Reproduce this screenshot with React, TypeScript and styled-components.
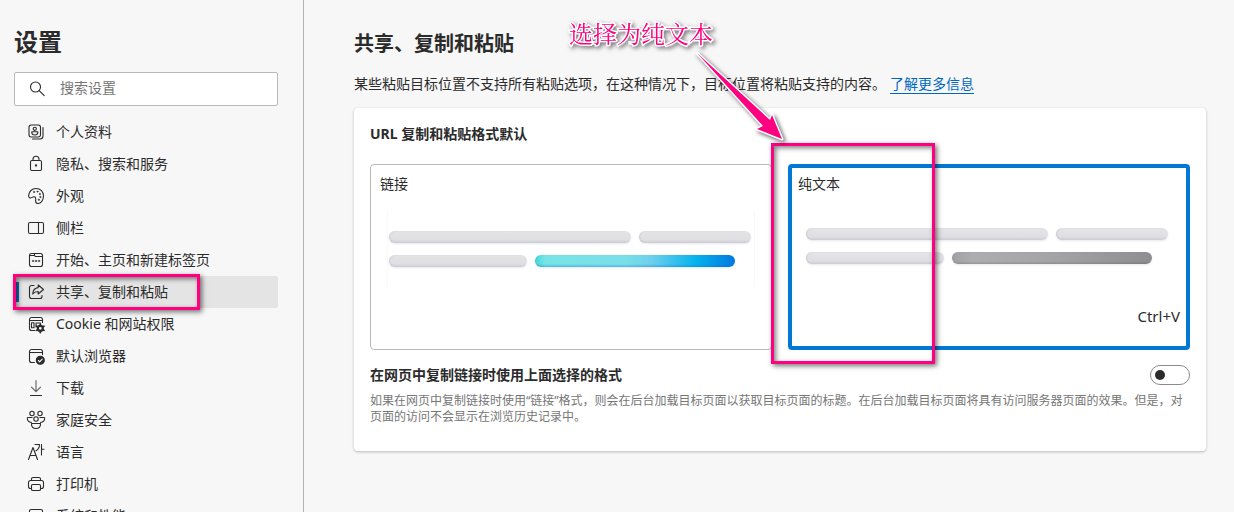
import React from 'react';
import styled, { createGlobalStyle } from 'styled-components';

const ink = '#2b2b2b';
const pink = '#ff0080';
const blue = '#0078d4';

const GlobalStyle = createGlobalStyle`
  * { box-sizing: border-box; }
  body {
    margin: 0;
    background: #f7f7f7;
    color: ${ink};
    font-family: "Noto Sans", "Noto Sans CJK SC", sans-serif;
    font-size: 14px;
    line-height: 20px;
  }
  h1, h2, h3, p, ul { margin: 0; padding: 0; }
`;

const Page = styled.div`
  display: flex;
  height: 100vh;
  overflow: hidden;
`;

const Sidebar = styled.aside`
  flex: 0 0 304px;
  padding: 28px 25px 0 14px;
  border-right: 1px solid #b4b4b4;
`;

const SidebarTitle = styled.h1`
  font-size: 24px;
  line-height: 28px;
  font-weight: 700;
`;

const SearchBox = styled.label`
  display: flex;
  align-items: center;
  gap: 13px;
  height: 34px;
  margin: 16px 0 10px;
  padding: 0 12px;
  background: #fff;
  border: 1px solid #b9b9b9;
  border-radius: 2px;
`;

const SearchInput = styled.input`
  flex: 1;
  min-width: 0;
  padding: 0 0 2px;
  border: 0;
  outline: 0;
  background: none;
  font: inherit;
  color: ${ink};
  &::placeholder { color: #757575; opacity: 1; }
`;

const NavList = styled.ul`
  list-style: none;
`;

const NavItem = styled.li`
  position: relative;
`;

const NavLink = styled.a<{ $active?: boolean }>`
  display: flex;
  align-items: center;
  gap: 10px;
  height: 32px;
  padding-left: 12px;
  border-radius: 2px;
  color: ${ink};
  text-decoration: none;
  white-space: nowrap;
  background: ${p => (p.$active ? '#e4e4e4' : 'transparent')};
`;

const ActiveMark = styled.span`
  position: absolute;
  left: 2px;
  top: 6px;
  width: 3px;
  height: 20px;
  background: #1068b4;
`;

const Icon = styled.svg`
  flex: none;
  width: 20px;
  height: 20px;
  fill: none;
  stroke: ${ink};
  stroke-width: 1.1;
  stroke-linecap: round;
  stroke-linejoin: round;
`;

const Highlight = styled.span`
  position: absolute;
  z-index: 2;
  border: 3px solid ${pink};
  box-shadow: 2px 2px 5px rgba(0, 0, 0, 0.55), inset 2px 2px 5px rgba(0, 0, 0, 0.5);
  pointer-events: none;
`;

const NavHighlight = styled(Highlight)`
  left: -1px;
  top: -2px;
  width: 187px;
  height: 36px;
`;

const OptionHighlight = styled(Highlight)`
  left: -17px;
  top: -21px;
  width: 164px;
  height: 221px;
`;

const Main = styled.main`
  position: relative;
  flex: 1;
  min-width: 0;
  padding: 30px 28px 0 50px;
`;

const Heading = styled.h2`
  font-size: 20px;
  line-height: 28px;
  font-weight: 700;
`;

const Intro = styled.p`
  margin: 16px 0 14px;
`;

const MoreLink = styled.a`
  margin-left: 4px;
  color: #0067c0;
  text-decoration: none;
  border-bottom: 1px solid #0067c0;
`;

const Card = styled.section`
  padding: 16px 16px 26px;
  background: #fff;
  border-radius: 4px;
  box-shadow: 0 1px 3px rgba(0, 0, 0, 0.25);
`;

const CardTitle = styled.h3`
  font-size: 14px;
  line-height: 20px;
  font-weight: 700;
`;

const Options = styled.div`
  display: grid;
  grid-template-columns: 1fr 1fr;
  gap: 16px;
  margin: 20px 0 15px;
`;

const OptionSlot = styled.div`
  position: relative;
`;

const Option = styled.label<{ $selected?: boolean }>`
  display: flex;
  flex-direction: column;
  height: 186px;
  padding: ${p => (p.$selected ? '6px' : '9px')};
  border: ${p => (p.$selected ? `4px solid ${blue}` : '1px solid #b9b9b9')};
  border-radius: 4px;
`;

const HiddenRadio = styled.input`
  position: absolute;
  opacity: 0;
  margin: 0;
`;

const Preview = styled.div<{ $framed?: boolean }>`
  display: flex;
  flex-direction: column;
  justify-content: center;
  gap: 12px;
  height: 76px;
  margin: ${p => (p.$framed ? '17px 7px 0' : '14px 7px 0')};
  padding-left: 1px;
  border: solid #f9f9f9;
  border-width: ${p => (p.$framed ? '0 1px' : '0')};
`;

const BarRow = styled.div`
  display: flex;
  gap: 8px;
`;

const tones = {
  plain: 'linear-gradient(#e3e3e6, #e0dfe3 70%, #cfced4)',
  link: 'linear-gradient(transparent 75%, rgba(0, 110, 220, 0.35)), linear-gradient(90deg, #3fd8d8, #78e4e6 5%, #7adfe8 45%, #6fd0ec 58%, #06b4ec 80%, #0078e0)',
  text: 'linear-gradient(transparent 75%, rgba(0, 0, 0, 0.12)), linear-gradient(90deg, #a0a0a2, #adadaf 10%, #a4a4a6 50%, #8e8e90)',
};

const Bar = styled.span<{ $width: number; $tone?: keyof typeof tones }>`
  width: ${p => p.$width}px;
  height: 12px;
  border-radius: 6px;
  background: ${p => tones[p.$tone ?? 'plain']};
  box-shadow: inset 1px 0 1px rgba(90, 90, 110, 0.15), 0 1px 2px rgba(120, 120, 180, 0.18);
`;

const Shortcut = styled.span`
  margin: auto 0 14px;
  font-size: 15px;
  text-align: right;
`;

const ToggleRow = styled.div`
  display: flex;
  align-items: center;
  justify-content: space-between;
`;

const ToggleLabel = styled.label`
  font-weight: 700;
`;

const Toggle = styled.input`
  appearance: none;
  position: relative;
  width: 40px;
  height: 20px;
  margin: 0;
  border: 1px solid #8a8a8a;
  border-radius: 10px;
  background: #fff;
  &::before {
    content: '';
    position: absolute;
    left: 4px;
    top: 4px;
    width: 10px;
    height: 10px;
    border-radius: 50%;
    background: ${ink};
  }
  &:checked::before { left: 24px; }
`;

const Hint = styled.p`
  margin-top: 8px;
  color: #767676;
  font-size: 12px;
  line-height: 16px;
`;

const NoteText = styled.span`
  position: absolute;
  left: 265px;
  top: 17px;
  z-index: 3;
  color: ${pink};
  font-family: "Noto Serif CJK SC", "Noto Sans CJK SC", serif;
  font-size: 24px;
  font-weight: 400;
  line-height: 32px;
  white-space: nowrap;
  -webkit-text-stroke: 3px #fff;
  paint-order: stroke fill;
  filter: drop-shadow(2px 2px 2px rgba(0, 0, 0, 0.5));
`;

const NoteArrow = styled.svg`
  position: absolute;
  left: 386px;
  top: 46px;
  z-index: 3;
  width: 104px;
  height: 104px;
  filter: drop-shadow(2px 2px 2px rgba(0, 0, 0, 0.6));
  pointer-events: none;
`;

const icons = {
  profile: (
    <>
      <rect x="3" y="3" width="11.5" height="12" rx="2.2" />
      <path d="M17 5.5v8.5a3 3 0 0 1-3 3H6.5" />
      <circle cx="8.8" cy="6.8" r="1.6" />
      <path d="M5.8 9.8h6v.8c0 1.6-1.4 2.4-3 2.4s-3-.8-3-2.4z" />
    </>
  ),
  lock: (
    <>
      <rect x="4.5" y="6.5" width="11" height="10" rx="1.5" />
      <path d="M7 6.5V5.2a3 3 0 0 1 6 0v1.3" />
      <circle cx="10" cy="11.5" r=".6" fill={ink} />
    </>
  ),
  palette: (
    <>
      <path d="M2.6 9.6C2.8 5.4 6 2.5 10 2.5c4.6 0 7.5 3.4 7.5 7.6 0 4.1-2.7 7.4-5.4 7.4-1.8 0-2.5-1.3-2.5-2.8 0-1.1.3-1.9-.1-2.9-.4-1-1.5-1.3-2.5-.9-1.2.5-2 1.3-3.1 1-.9-.2-1.3-1.2-1.3-2.3z" />
      <g fill={ink} strokeWidth=".4">
        <circle cx="8" cy="6" r=".7" />
        <circle cx="11.5" cy="5.6" r=".7" />
        <circle cx="13.8" cy="8" r=".7" />
        <circle cx="14.3" cy="11" r=".7" />
        <circle cx="12.8" cy="13.8" r=".7" />
      </g>
    </>
  ),
  panel: (
    <>
      <rect x="2.5" y="4.5" width="15" height="11" rx="1.5" />
      <path d="M12.5 4.500v11" />
    </>
  ),
  start: (
    <>
      <rect x="3.5" y="3.5" width="13" height="13" rx="2" />
      <path d="M3.5 5.5h5M8.500 3.500v1.800a1.200 1.200 0 0 0 1.200 1.200h6.800" />
      <g fill={ink} strokeWidth=".4">
        <circle cx="7" cy="11" r=".8" />
        <circle cx="10" cy="11" r=".8" />
        <circle cx="13" cy="11" r=".8" />
      </g>
    </>
  ),
  share: (
    <>
      <path d="M8 3.500H5.500a2 2 0 0 0-2 2v9a2 2 0 0 0 2 2H14a2 2 0 0 0 2-2v-1" />
      <path d="M12.200 3 17.500 7.500l-5.300 4.500V9.500c-2.400 0-4.200.8-5.500 2.500.2-3.600 2-6 5.500-6.400z" />
    </>
  ),
  cookie: (
    <>
      <path d="M16.500 8.500v-3a2 2 0 0 0-2-2h-9a2 2 0 0 0-2 2v9a2 2 0 0 0 2 2H9M3.500 6.500h13M5.500 8.800h2.500v5H5.500zM10 13V9h4.500" />
      <circle cx="14.300" cy="14.300" r="2.500" strokeWidth="2.200" />
      <path d="M14.300 10v1.200M14.300 17.400v1.200M10.600 12.200l1 .6M17 15.800l1 .6M10.600 16.400l1-.6M17 12.800l1-.6" strokeWidth="1.800" />
    </>
  ),
  browser: (
    <>
      <path d="M16.500 8.500v-3a2 2 0 0 0-2-2h-9a2 2 0 0 0-2 2v9a2 2 0 0 0 2 2H8.500M3.500 6.500h13" />
      <circle cx="14.300" cy="14.300" r="4" fill={ink} />
      <path d="m12.400 14.500 1.300 1.300 2.500-2.700" stroke="#fff" />
    </>
  ),
  download: (
    <>
      <path d="M10 2.500v11M5.500 9.200 10 13.700l4.500-4.500" stroke="#606060" />
      <path d="M4.500 17.500h11" />
    </>
  ),
  family: (
    <>
      <circle cx="6" cy="3.500" r="2.200" />
      <circle cx="14" cy="3.500" r="2.200" />
      <circle cx="10" cy="9" r="2.200" />
      <path d="M5.500 12.500c-2.600-.3-4.200-1.900-4.200-4.200 0-.5.300-.8.800-.8h4M14.500 12.500c2.600-.3 4.200-1.900 4.200-4.200 0-.5-.3-.8-.8-.8h-4" />
      <path d="M5.500 13.500h9v.8c0 2.500-2 4.200-4.500 4.200s-4.500-1.700-4.500-4.200z" />
    </>
  ),
  language: <path d="M2.500 17.500 7 5.500l4.500 12M4.200 13.500h5.600M9 2.500h4.500c0 3-1.200 5-3.500 6.200M15.500 2.500V13M15.500 7.200H18" />,
  printer: (
    <>
      <path d="M5.500 14.500h-1a2 2 0 0 1-2-2v-4a2 2 0 0 1 2-2h11a2 2 0 0 1 2 2v4a2 2 0 0 1-2 2h-1" />
      <path d="M5.500 6.500V5A1.500 1.500 0 0 1 7 3.500h6A1.500 1.500 0 0 1 14.500 5v1.500" />
      <rect x="5.500" y="10.500" width="9" height="6" rx="1.300" />
    </>
  ),
  system: (
    <>
      <rect x="3.500" y="3.500" width="13" height="10.500" rx="1.500" />
      <path d="M7 17h6M10 14v3" />
    </>
  ),
};

const navItems: { icon: keyof typeof icons; text: string; active?: boolean }[] = [
  { icon: 'profile', text: '个人资料' },
  { icon: 'lock', text: '隐私、搜索和服务' },
  { icon: 'palette', text: '外观' },
  { icon: 'panel', text: '侧栏' },
  { icon: 'start', text: '开始、主页和新建标签页' },
  { icon: 'share', text: '共享、复制和粘贴', active: true },
  { icon: 'cookie', text: 'Cookie 和网站权限' },
  { icon: 'browser', text: '默认浏览器' },
  { icon: 'download', text: '下载' },
  { icon: 'family', text: '家庭安全' },
  { icon: 'language', text: '语言' },
  { icon: 'printer', text: '打印机' },
  { icon: 'system', text: '系统和性能' },
];

function FormatPreview({ tone, framed }: { tone: 'link' | 'text'; framed?: boolean }) {
  return (
    <Preview $framed={framed} aria-hidden="true">
      <BarRow><Bar $width={242} /><Bar $width={112} /></BarRow>
      <BarRow><Bar $width={138} /><Bar $width={200} $tone={tone} /></BarRow>
    </Preview>
  );
}

export default function App() {
  return (
    <Page lang="zh-CN">
      <GlobalStyle />
      <Sidebar>
        <SidebarTitle>设置</SidebarTitle>
        <SearchBox>
          <Icon viewBox="0 0 20 20" aria-hidden="true">
            <circle cx="8.500" cy="8" r="5" />
            <path d="m12.200 11.700 5 5" />
          </Icon>
          <SearchInput type="search" placeholder="搜索设置" aria-label="搜索设置" />
        </SearchBox>
        <nav>
          <NavList>
            {navItems.map(item => (
              <NavItem key={item.icon}>
                <NavLink href="#" $active={item.active} aria-current={item.active ? 'page' : undefined}>
                  <Icon viewBox="0 0 20 20" aria-hidden="true">{icons[item.icon]}</Icon>
                  {item.text}
                </NavLink>
                {item.active && <><ActiveMark /><NavHighlight /></>}
              </NavItem>
            ))}
          </NavList>
        </nav>
      </Sidebar>
      <Main>
        <Heading>共享、复制和粘贴</Heading>
        <Intro>
          某些粘贴目标位置不支持所有粘贴选项，在这种情况下，目标位置将粘贴支持的内容。
          <MoreLink href="#">了解更多信息</MoreLink>
        </Intro>
        <Card>
          <CardTitle>URL 复制和粘贴格式默认</CardTitle>
          <Options>
            <OptionSlot>
              <Option>
                <HiddenRadio type="radio" name="format" />
                链接
                <FormatPreview tone="link" framed />
              </Option>
            </OptionSlot>
            <OptionSlot>
              <Option $selected>
                <HiddenRadio type="radio" name="format" defaultChecked />
                纯文本
                <FormatPreview tone="text" />
                <Shortcut>Ctrl+V</Shortcut>
              </Option>
              <OptionHighlight />
            </OptionSlot>
          </Options>
          <ToggleRow>
            <ToggleLabel htmlFor="use-format">在网页中复制链接时使用上面选择的格式</ToggleLabel>
            <Toggle id="use-format" type="checkbox" role="switch" />
          </ToggleRow>
          <Hint>
            如果在网页中复制链接时使用“链接”格式，则会在后台加载目标页面以获取目标页面的标题。在后台加载目标页面将具有访问服务器页面的效果。但是，对页面的访问不会显示在浏览历史记录中。
          </Hint>
        </Card>
        <NoteText>选择为纯文本</NoteText>
        <NoteArrow viewBox="0 0 104 104" aria-hidden="true">
          <path d="M7 7 80 74 82 69 92 93 67 83 73 80Z" fill={pink} stroke="#fff" strokeWidth="3" strokeLinejoin="round" paintOrder="stroke" />
        </NoteArrow>
      </Main>
    </Page>
  );
}
